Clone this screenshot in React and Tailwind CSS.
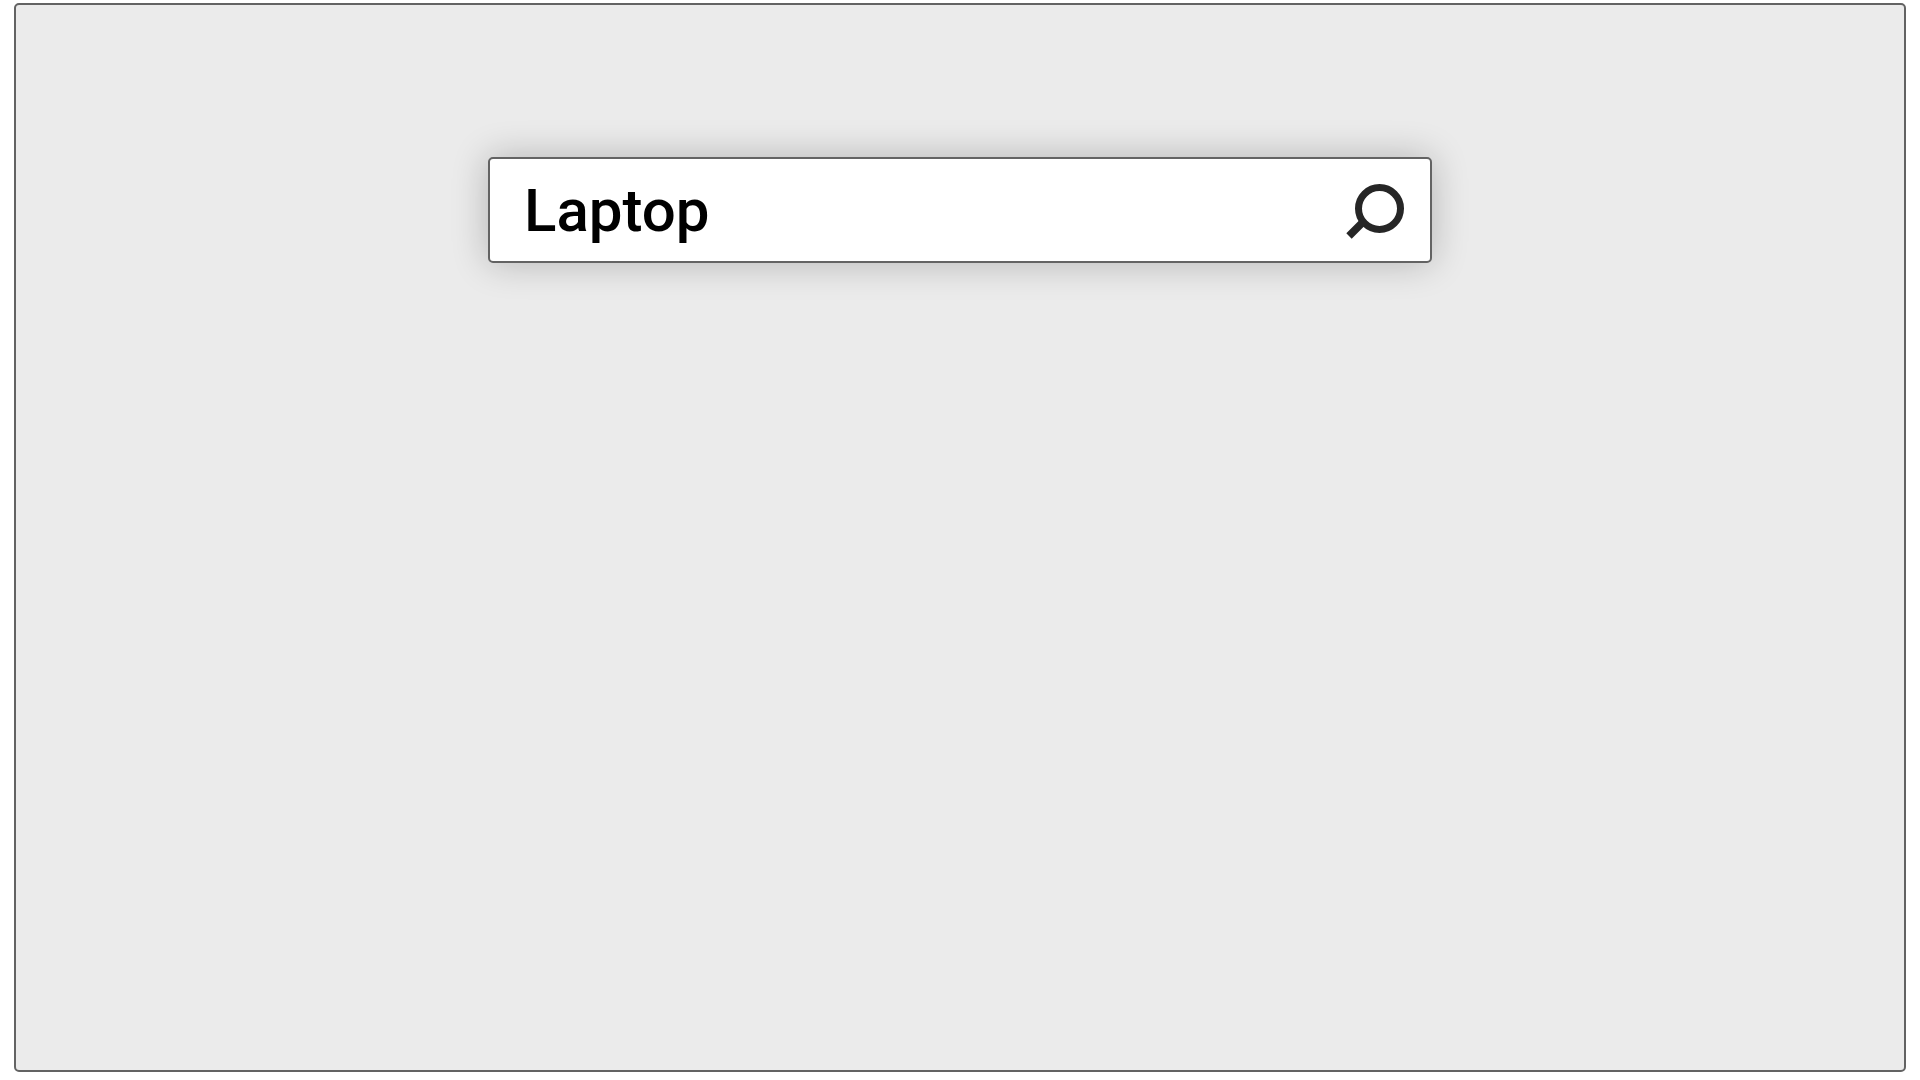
import { useState } from "react";

const SearchIcon = () => (
  <svg
    width="60"
    height="60"
    viewBox="0 0 60 60"
    fill="none"
    stroke="#262626"
    aria-hidden="true"
  >
    <circle cx="33.5" cy="27.5" r="21" strokeWidth="7" />
    <path d="M18.5 39.5 L3 55" strokeWidth="7.6" />
  </svg>
);

const SearchBar = () => {
  const [query, setQuery] = useState("Laptop");

  return (
    <form
      role="search"
      onSubmit={(e) => e.preventDefault()}
      className="flex w-1/2 items-center rounded-[5px] border-2 border-[#636363] bg-white pt-[13px] pr-6 pb-[11px] pl-[34px] shadow-[0_0_36px_rgba(0,0,0,0.24)]"
    >
      <input
        type="text"
        aria-label="Search"
        value={query}
        onChange={(e) => setQuery(e.target.value)}
        className="h-[78px] min-w-0 flex-1 bg-transparent font-['Roboto',sans-serif] text-[60px] font-medium text-black outline-none"
      />
      <button type="submit" aria-label="Search" className="cursor-pointer">
        <SearchIcon />
      </button>
    </form>
  );
};

const App = () => {
  return (
    <div className="flex min-h-screen bg-white px-[14px] pt-[3px] pb-2">
      <main className="flex flex-1 flex-col items-center rounded-[5px] border-2 border-[#636363] bg-[#ebebeb] pt-[152px]">
        <SearchBar />
      </main>
    </div>
  );
};

export default App;
